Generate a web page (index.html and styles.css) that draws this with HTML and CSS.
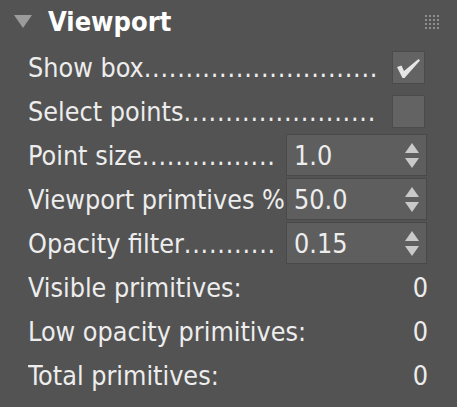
FILE: index.html
```html
<!DOCTYPE html>
<html lang="en">
<head>
  <meta charset="UTF-8" />
  <meta name="viewport" content="width=device-width, initial-scale=1.0" />
  <title>Viewport</title>

  <link rel="stylesheet" href="styles.css">

</head>
<body>

<div class="panel">
  <div class="panel-header">
    <svg class="caret" width="18" height="13" viewBox="0 0 18 13"><path d="M0 0 L18 0 L9 13 Z" fill="#9b9b9b"/></svg>
    <span class="panel-title">Viewport</span>
    <svg class="grip" width="14" height="14" viewBox="0 0 14 14" fill="#8e8e8e">
      <rect x="0" y="0" width="2" height="2"/><rect x="4" y="0" width="2" height="2"/><rect x="8" y="0" width="2" height="2"/><rect x="12" y="0" width="2" height="2"/>
      <rect x="0" y="4" width="2" height="2"/><rect x="4" y="4" width="2" height="2"/><rect x="8" y="4" width="2" height="2"/><rect x="12" y="4" width="2" height="2"/>
      <rect x="0" y="8" width="2" height="2"/><rect x="4" y="8" width="2" height="2"/><rect x="8" y="8" width="2" height="2"/><rect x="12" y="8" width="2" height="2"/>
      <rect x="0" y="12" width="2" height="2"/><rect x="4" y="12" width="2" height="2"/><rect x="8" y="12" width="2" height="2"/><rect x="12" y="12" width="2" height="2"/>
    </svg>
  </div>

  <div class="row">
    <span class="label">Show box<span class="leader">............................</span></span>
    <div class="check">
      <svg width="31" height="31" viewBox="0 0 31 31"><path d="M4 15 L8.5 13.5 L11 19 L25.5 7 L27 8.5 L11.5 26 L9.5 26 Z" fill="#e6e6e6"/></svg>
    </div>
  </div>

  <div class="row">
    <span class="label">Select points<span class="leader">.......................</span></span>
    <div class="check"></div>
  </div>

  <div class="row">
    <span class="label">Point size<span class="leader">................</span></span>
    <div class="num-input">
      <span class="num-value">1.0</span>
      <svg class="spin" width="14" height="25" viewBox="0 0 14 25" fill="#c9c9c9"><path d="M7 0 L14 10 L0 10 Z"/><path d="M0 15 L14 15 L7 25 Z"/></svg>
    </div>
  </div>

  <div class="row">
    <span class="label">Viewport primtives %</span>
    <div class="num-input">
      <span class="num-value">50.0</span>
      <svg class="spin" width="14" height="25" viewBox="0 0 14 25" fill="#c9c9c9"><path d="M7 0 L14 10 L0 10 Z"/><path d="M0 15 L14 15 L7 25 Z"/></svg>
    </div>
  </div>

  <div class="row">
    <span class="label">Opacity filter<span class="leader">...........</span></span>
    <div class="num-input">
      <span class="num-value">0.15</span>
      <svg class="spin" width="14" height="25" viewBox="0 0 14 25" fill="#c9c9c9"><path d="M7 0 L14 10 L0 10 Z"/><path d="M0 15 L14 15 L7 25 Z"/></svg>
    </div>
  </div>

  <div class="row">
    <span class="label">Visible primitives:</span>
    <span class="stat">0</span>
  </div>
  <div class="row">
    <span class="label">Low opacity primitives:</span>
    <span class="stat">0</span>
  </div>
  <div class="row">
    <span class="label">Total primitives:</span>
    <span class="stat">0</span>
  </div>
</div>

</body>
</html>
```

FILE: styles.css
```css
* {
  box-sizing: border-box;
}

body {
  margin: 0;
  background-color: #535353;
  font-family: "DejaVu Sans Condensed", "DejaVu Sans", sans-serif;
  color: #ededed;
}

.panel {
  width: 457px;
  height: 407px;
  overflow: hidden;
}

.panel-header {
  height: 45px;
  display: flex;
  align-items: center;
  padding: 0 18px 2px 14px;
}

.caret {
  margin-right: 16px;
}

.panel-title {
  font-size: 27px;
  font-weight: bold;
  color: #ffffff;
}

.grip {
  margin-left: auto;
}

.row {
  height: 44px;
  display: flex;
  align-items: center;
  padding: 0 29px 0 28px;
  font-size: 26.7px;
}

.label {
  flex: 1;
  white-space: nowrap;
  overflow: hidden;
}

.leader {
  letter-spacing: 0.75px;
}

.check {
  width: 33px;
  height: 33px;
  margin-right: 3px;
  background: #636363;
  border: 1px solid #4b4b4b;
}

.check svg {
  display: block;
}

.num-input {
  width: 141px;
  height: 42px;
  margin-right: 1px;
  display: flex;
  align-items: center;
  padding: 0 7px 0 7px;
  background: #5e5e5e;
  border: 1px solid #494949;
}

.num-value {
  flex: 1;
}

.stat {
  margin-left: auto;
}
```
